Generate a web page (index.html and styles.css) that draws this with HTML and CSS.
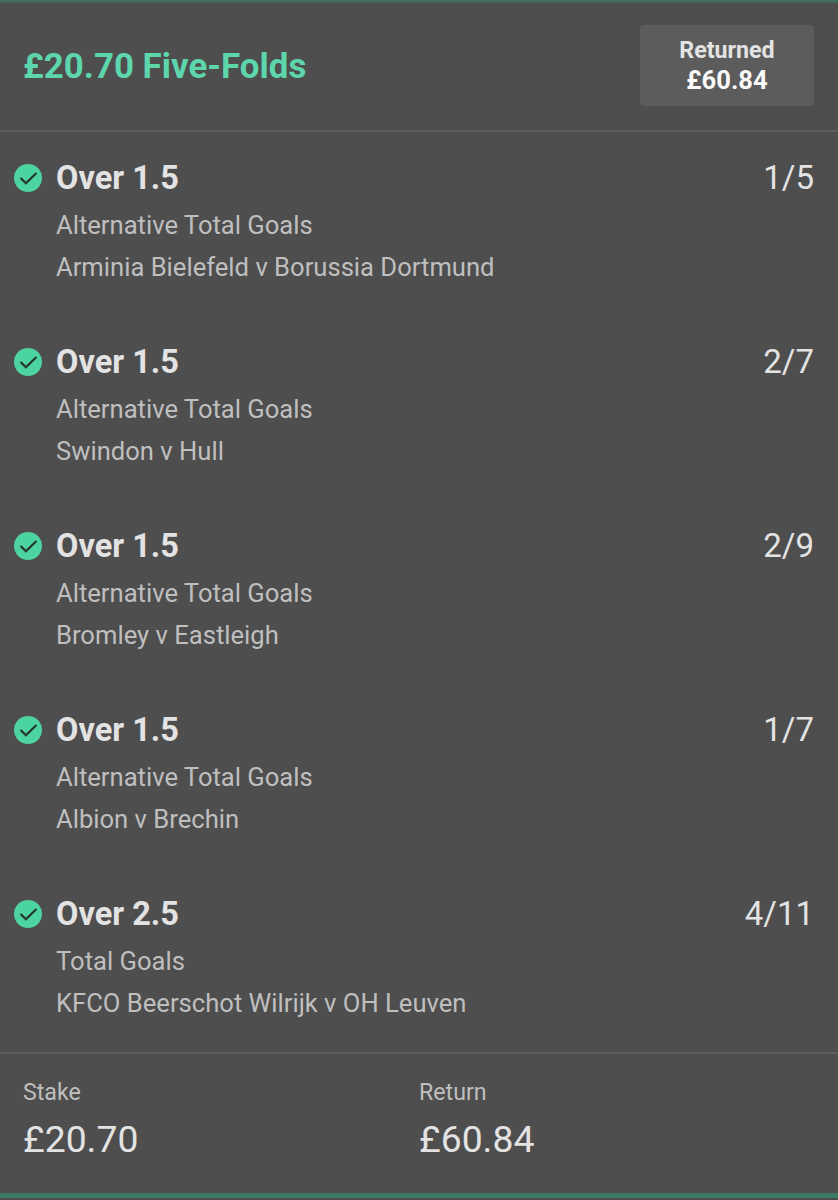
FILE: index.html
```
<!DOCTYPE html>
<html lang="en">
<head>
  <meta charset="UTF-8">
  <meta name="viewport" content="width=device-width, initial-scale=1.0">
  <title>£20.70 Five-Folds</title>
  <link rel="stylesheet" href="styles.css">
</head>
<body>
  <!-- Tick shared by all the selections -->
  <svg width="0" height="0" class="sprite">
    <symbol id="tick" viewBox="0 0 28 28">
      <circle cx="14" cy="14" r="14" fill="#4bd3a0"/>
      <path d="M6.600 14l5.300 5.300L22.500 9" fill="none" stroke="#26332e" stroke-width="2.200"/>
    </symbol>
  </svg>

  <div class="bet">
    <header class="bet-header">
      <h1>£20.70 Five-Folds</h1>
      <div class="returned">
        <span class="returned-label">Returned</span>
        <span class="returned-value">£60.84</span>
      </div>
    </header>

    <ul class="selections">
      <li class="selection">
        <svg class="tick"><use href="#tick"/></svg>
        <div class="details">
          <h2>Over 1.5</h2>
          <p>Alternative Total Goals</p>
          <p>Arminia Bielefeld v Borussia Dortmund</p>
        </div>
        <span class="odds">1/5</span>
      </li>
      <li class="selection">
        <svg class="tick"><use href="#tick"/></svg>
        <div class="details">
          <h2>Over 1.5</h2>
          <p>Alternative Total Goals</p>
          <p>Swindon v Hull</p>
        </div>
        <span class="odds">2/7</span>
      </li>
      <li class="selection">
        <svg class="tick"><use href="#tick"/></svg>
        <div class="details">
          <h2>Over 1.5</h2>
          <p>Alternative Total Goals</p>
          <p>Bromley v Eastleigh</p>
        </div>
        <span class="odds">2/9</span>
      </li>
      <li class="selection">
        <svg class="tick"><use href="#tick"/></svg>
        <div class="details">
          <h2>Over 1.5</h2>
          <p>Alternative Total Goals</p>
          <p>Albion v Brechin</p>
        </div>
        <span class="odds">1/7</span>
      </li>
      <li class="selection">
        <svg class="tick"><use href="#tick"/></svg>
        <div class="details">
          <h2>Over 2.5</h2>
          <p>Total Goals</p>
          <p>KFCO Beerschot Wilrijk v OH Leuven</p>
        </div>
        <span class="odds">4/11</span>
      </li>
    </ul>

    <footer class="bet-footer">
      <div class="total">
        <span class="total-label">Stake</span>
        <span class="total-value">£20.70</span>
      </div>
      <div class="total">
        <span class="total-label">Return</span>
        <span class="total-value">£60.84</span>
      </div>
    </footer>
  </div>
</body>
</html>
```
FILE: styles.css
```
* {
  margin: 0;
  padding: 0;
  box-sizing: border-box;
}

body {
  font-family: Roboto, sans-serif;
  background-color: #4e4e4e;
  color: #e3e3e3;
}

.sprite {
  display: block;
}

.bet {
  height: 1198px;
  border-top: 2px solid #40705f;
  border-bottom: 5px solid #3d7a63;
  margin-bottom: 2px;
  overflow: hidden;
}

/* Header */
.bet-header {
  display: flex;
  justify-content: space-between;
  height: 130px;
  padding: 23px 24px 0 23px;
  border-bottom: 2px solid #5e5e5e;
  background: linear-gradient(#475b54, #4e4e4e 3px);
}

.bet-header h1 {
  font-size: 34.9px;
  line-height: 84px;
  font-weight: 700;
  color: #5dd6ac;
}

.returned {
  display: flex;
  flex-direction: column;
  align-items: center;
  justify-content: center;
  width: 174px;
  height: 81px;
  padding-bottom: 1px;
  border-radius: 4px;
  background-color: #5c5c5c;
  font-weight: 700;
  line-height: 30px;
}

.returned-label {
  font-size: 23.2px;
}

.returned-value {
  font-size: 25.6px;
  color: #fafafa;
}

/* Selections */
.selections {
  height: 920px;
  padding: 24px 24px 0 14px;
  list-style: none;
}

.selection {
  display: flex;
  height: 184px;
}

.tick {
  width: 28px;
  height: 28px;
  margin: 8px 14px 0 0;
}

.details {
  flex: 1;
}

.details h2 {
  font-size: 32.5px;
  line-height: 44px;
  font-weight: 700;
  margin-bottom: 4px;
}

.details p {
  font-size: 25.6px;
  line-height: 42px;
  color: #bfbfbf;
}

.odds {
  font-size: 33px;
  line-height: 43px;
}

/* Totals */
.bet-footer {
  display: flex;
  height: 141px;
  padding: 21px 23px 0;
  border-top: 2px solid #5e5e5e;
}

.total {
  display: flex;
  flex-direction: column;
  width: 396px;
}

.total-label {
  font-size: 23.2px;
  line-height: 34px;
  color: #bfbfbf;
}

.total-value {
  font-size: 37.3px;
  line-height: 60px;
}
```
